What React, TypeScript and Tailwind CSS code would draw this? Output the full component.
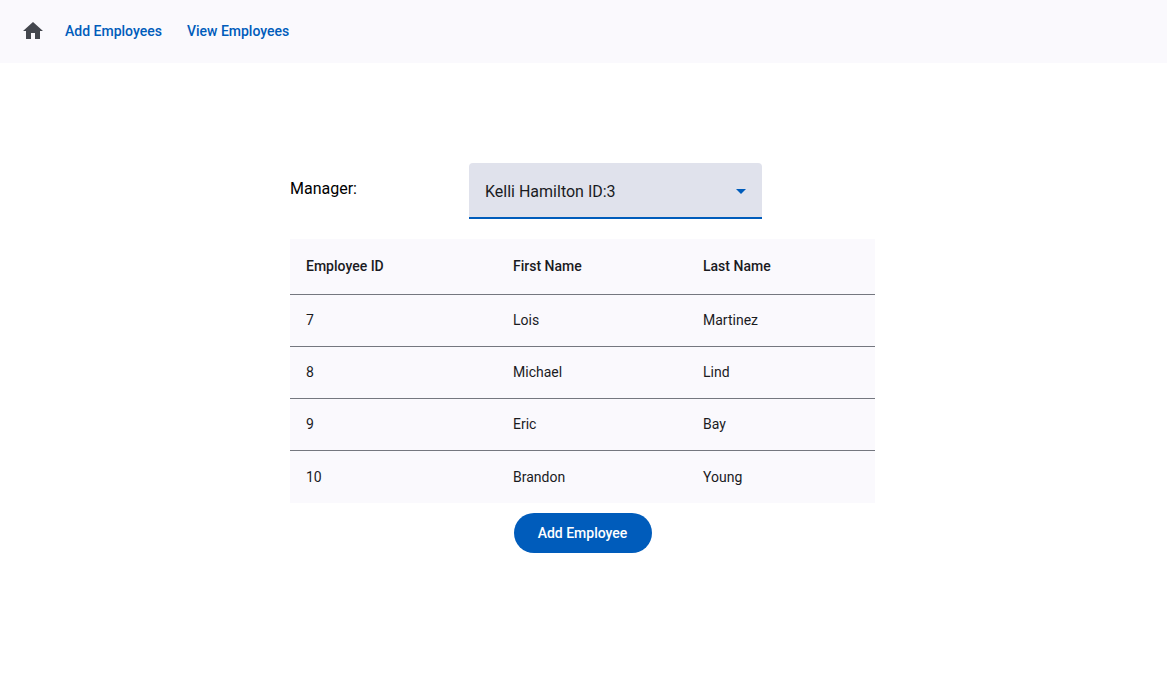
import { useState } from "react";

type Employee = { id: number; first: string; last: string };

const employees: Employee[] = [
  { id: 7, first: "Lois", last: "Martinez" },
  { id: 8, first: "Michael", last: "Lind" },
  { id: 9, first: "Eric", last: "Bay" },
  { id: 10, first: "Brandon", last: "Young" },
];

function NavBar() {
  return (
    <nav className="flex items-center gap-[25px] bg-[#faf9fd] px-[21px] pt-[19px] pb-5 text-sm font-medium text-[#005cbb]">
      <a href="#home" aria-label="Home" className="-mr-[5px] text-[#44474e]">
        <svg viewBox="0 0 24 24" className="size-6" fill="currentColor" aria-hidden="true">
          <path d="M10 20v-6h4v6h5v-8h3L12 3 2 12h3v8z" />
        </svg>
      </a>
      <a href="#add">Add Employees</a>
      <a href="#view">View Employees</a>
    </nav>
  );
}

function ManagerSelect() {
  const [manager, setManager] = useState("3");
  return (
    <div className="flex items-start">
      <label htmlFor="manager" className="mt-3.5 mr-28 leading-6 text-black">
        Manager:
      </label>
      <div className="relative w-[293px]">
        <select
          id="manager"
          value={manager}
          onChange={(e) => setManager(e.target.value)}
          className="block h-14 w-full appearance-none rounded-t border-b-2 border-[#005cbb] bg-[#e0e2ec] pt-1 pr-10 pl-4 text-base text-[#1a1b1f] outline-none"
        >
          <option value="3">Kelli Hamilton ID:3</option>
        </select>
        <svg
          viewBox="0 0 24 24"
          className="pointer-events-none absolute top-4 right-[9px] size-6 text-[#005cbb]"
          fill="currentColor"
          aria-hidden="true"
        >
          <path d="M7 10l5 5 5-5z" />
        </svg>
      </div>
    </div>
  );
}

function EmployeeTable() {
  return (
    <table className="mt-5 w-full table-fixed border-collapse bg-[#faf9fd] text-left text-sm text-[#1a1b1f]">
      <thead>
        <tr className="h-[55px] border-b border-[#74777f]">
          <th className="w-[207px] px-4 font-medium">Employee ID</th>
          <th className="w-[190px] px-4 font-medium">First Name</th>
          <th className="px-4 font-medium">Last Name</th>
        </tr>
      </thead>
      <tbody>
        {employees.map((e) => (
          <tr key={e.id} className="h-13 border-b border-[#74777f] last:h-[53px] last:border-b-0">
            <td className="px-4">{e.id}</td>
            <td className="px-4">{e.first}</td>
            <td className="px-4">{e.last}</td>
          </tr>
        ))}
      </tbody>
    </table>
  );
}

export default function App() {
  return (
    <div className="min-h-screen bg-white font-['Roboto',sans-serif]">
      <NavBar />
      <main className="flex justify-center pt-[100px] pr-0.5">
        <div className="flex w-full max-w-[585px] flex-col">
          <ManagerSelect />
          <EmployeeTable />
          <button
            type="button"
            className="mt-2.5 h-10 min-w-[138px] self-center rounded-full bg-[#005cbb] px-6 text-sm font-medium text-white"
          >
            Add Employee
          </button>
        </div>
      </main>
    </div>
  );
}
